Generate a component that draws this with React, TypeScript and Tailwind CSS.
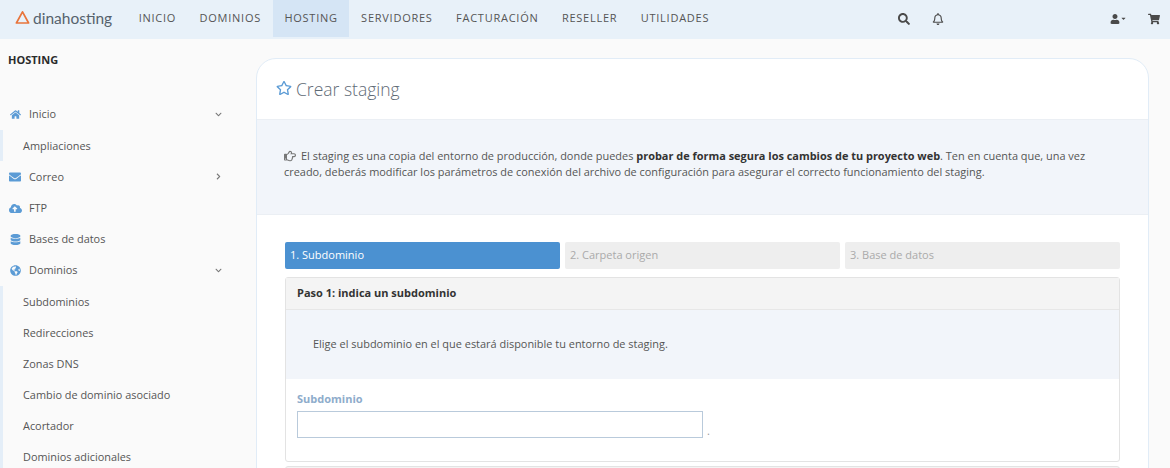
import React from 'react';
import {
  FaChevronDown,
  FaChevronRight,
  FaCloudUploadAlt,
  FaDatabase,
  FaEnvelope,
  FaGlobeAmericas,
  FaHome,
  FaRegBell,
  FaRegHandPointRight,
  FaRegStar,
  FaSearch,
  FaShoppingCart,
  FaUser,
  FaCaretDown,
} from 'react-icons/fa';

const navItems = ['INICIO', 'DOMINIOS', 'HOSTING', 'SERVIDORES', 'FACTURACIÓN', 'RESELLER', 'UTILIDADES'];

const menu = [
  { label: 'Inicio', icon: <FaHome size={11} />, arrow: 'down' },
  { label: 'Ampliaciones', sub: true },
  { label: 'Correo', icon: <FaEnvelope size={12} />, arrow: 'right' },
  { label: 'FTP', icon: <FaCloudUploadAlt size={13} /> },
  { label: 'Bases de datos', icon: <FaDatabase size={11} /> },
  { label: 'Dominios', icon: <FaGlobeAmericas size={11} />, arrow: 'down' },
  { label: 'Subdominios', sub: true },
  { label: 'Redirecciones', sub: true },
  { label: 'Zonas DNS', sub: true },
  { label: 'Cambio de dominio asociado', sub: true },
  { label: 'Acortador', sub: true },
  { label: 'Dominios adicionales', sub: true },
];

const Logo = () => (
  <div className="flex items-center gap-[3px] w-[127px] pl-[15px]">
    <svg width="15" height="15" viewBox="0 0 15 15" fill="none" className="mb-[2px]">
      <path d="M7.5 1.8 13.6 13H1.4Z" stroke="#e8743b" strokeWidth="1.7" strokeLinejoin="round" />
    </svg>
    <span className="font-['Lato',sans-serif] text-[15.5px] leading-none text-[#56626d]">dinahosting</span>
  </div>
);

const Header = () => (
  <header className="flex items-start h-[39px] bg-[#e8f1f9] text-[#555]">
    <div className="flex items-center h-[37px]">
      <Logo />
    </div>
    <nav className="flex">
      {navItems.map((item) => (
        <a
          key={item}
          className={`flex items-center h-[37px] px-[11.7px] text-[11px] tracking-[0.75px] ${
            item === 'HOSTING' ? 'bg-[#d5e5f5]' : ''
          }`}
        >
          {item}
        </a>
      ))}
    </nav>
    <div className="flex items-center h-[37px] ml-auto pr-[10px] text-[#4a4a4a]">
      <FaSearch size={12} className="mr-[22px]" />
      <FaRegBell size={12} className="mr-[166px]" />
      <FaUser size={10} />
      <FaCaretDown size={7} className="mr-[21px]" />
      <FaShoppingCart size={12} />
    </div>
  </header>
);

const Sidebar = () => (
  <aside className="w-[256px] shrink-0 pt-[13px]">
    <h2 className="pl-[8px] text-[11px] leading-[15px] font-bold text-[#2b2b2b]">HOSTING</h2>
    <ul className="mt-[32px]">
      {menu.map((m) =>
        m.sub ? (
          <li
            key={m.label}
            className="flex items-center h-[31.2px] pl-[20px] border-l-[3px] border-[#e4eef8] text-[10.9px] text-[#555]"
          >
            {m.label}
          </li>
        ) : (
          <li key={m.label} className="flex items-center h-[31.2px] pl-[8px] pr-[34px] text-[10.9px] text-[#555]">
            <span className="flex justify-center w-[14px] mr-[7px] text-[#5b9bd5]">{m.icon}</span>
            {m.label}
            {m.arrow === 'down' && <FaChevronDown size={7} className="ml-auto text-[#777]" />}
            {m.arrow === 'right' && <FaChevronRight size={7} className="ml-auto text-[#777]" />}
          </li>
        ),
      )}
    </ul>
  </aside>
);

const Step = ({ label, active }: { label: string; active?: boolean }) => (
  <div
    className={`flex-1 h-[27px] flex items-center px-[5px] rounded-[2px] text-[11px] ${
      active ? 'bg-[#4b91d1] text-white' : 'bg-[#eeeeee] text-[#aaaaaa]'
    }`}
  >
    {label}
  </div>
);

const Content = () => (
  <main className="flex-1 min-w-0 pt-[19px]">
    <section className="w-[893px] h-[500px] bg-white border border-[#e1ecf7] rounded-t-[20px]">
      <div className="flex items-center h-[60px] pl-[19px]">
        <FaRegStar size={16} className="text-[#5b9bd5] mr-[4px] mb-[3px]" />
        <h1 className="text-[17.5px] font-light text-[#5f6b76]">Crear staging</h1>
      </div>
      <div className="flex items-center h-[96px] px-[27px] pb-[7px] bg-[#f2f5fa] border-y border-[#ebeff4]">
        <p className="text-[10.95px] leading-[15.5px] text-[#555]">
          <FaRegHandPointRight size={12} className="inline mr-[5px] mb-[2px] text-[#777]" />
          El staging es una copia del entorno de producción, donde puedes{' '}
          <strong className="font-bold text-[#333]">probar de forma segura los cambios de tu proyecto web</strong>. Ten
          en cuenta que, una vez creado, deberás modificar los parámetros de conexión del archivo de configuración para
          asegurar el correcto funcionamiento del staging.
        </p>
      </div>
      <div className="px-[28px] pt-[27px]">
        <div className="flex gap-[5px]">
          <Step label="1. Subdominio" active />
          <Step label="2. Carpeta origen" />
          <Step label="3. Base de datos" />
        </div>
        <div className="mt-[8px] h-[185px] border border-[#e3e3e3] rounded-[3px]">
          <div className="flex items-center h-[32px] px-[11px] bg-[#f4f4f4] border-b border-[#e7e7e7] text-[11px] font-bold text-[#333]">
            Paso 1: indica un subdominio
          </div>
          <div className="flex items-center h-[69px] pl-[27px] bg-[#f2f5fa] text-[10.95px] text-[#555]">
            Elige el subdominio en el que estará disponible tu entorno de staging.
          </div>
          <div className="pl-[11px] pt-[12px]">
            <label className="block text-[11px] leading-[15px] font-bold text-[#8eaccb]">Subdominio</label>
            <div className="flex items-end mt-[5px]">
              <input className="w-[406px] h-[27px] border border-[#b9cadb] bg-white" />
              <span className="ml-[4px] text-[11px] leading-[14px] text-[#999]">.</span>
            </div>
          </div>
        </div>
        <div className="mt-[4px] h-[30px] border border-[#e3e3e3] rounded-[3px] bg-[#f4f4f4]" />
      </div>
    </section>
  </main>
);

export default function App() {
  return (
    <div className="h-[468px] overflow-hidden bg-[#fafafa] font-['Open_Sans',sans-serif]">
      <Header />
      <div className="flex">
        <Sidebar />
        <Content />
      </div>
    </div>
  );
}
